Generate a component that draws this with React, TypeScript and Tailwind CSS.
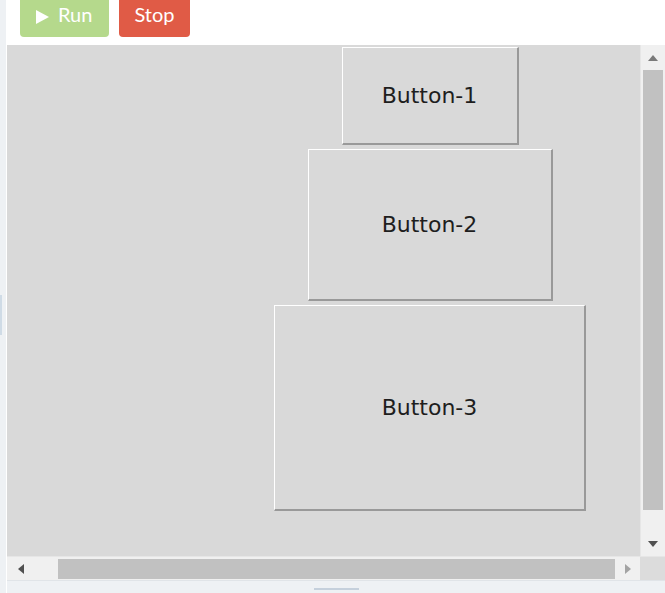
import React from 'react';

const TkButton = ({ label, w, h }: { label: string; w: string; h: string }) => (
  <div
    className={`${w} ${h} flex items-center justify-center bg-[#d9d9d9] border-t border-l border-white border-b-2 border-r-2 border-b-[#999999] border-r-[#999999] text-[22px] text-[#1e1e1e] [font-family:'DejaVu_Sans',sans-serif]`}
  >
    {label}
  </div>
);

export default function App() {
  return (
    <div className="w-[665px] h-[593px] flex bg-[#eef1f4] overflow-hidden">
      {/* left gutter */}
      <div className="w-[7px] shrink-0 flex flex-col border-r border-white">
        <div className="h-[295px]" />
        <div className="h-[40px] w-[2px] bg-[#cfdbe6]" />
      </div>

      <div className="flex-1 flex flex-col">
        {/* toolbar */}
        <div className="h-[45px] shrink-0 bg-white flex items-end gap-[10px] pl-[13px] pb-[8px] overflow-hidden [font-family:Lato,sans-serif]">
          <div className="h-[44px] w-[89px] shrink-0 rounded-[4px] bg-[#b5d98c] text-white text-[20px] flex items-end pb-[8px] pl-[16px] gap-[9px]">
            <svg width="13" height="14" viewBox="0 0 13 14" className="mb-[5px]">
              <path d="M0 0 L13 7 L0 14 Z" fill="white" />
            </svg>
            <span>Run</span>
          </div>
          <div className="h-[44px] w-[71px] shrink-0 rounded-[4px] bg-[#e05b46] text-white text-[20px] flex items-end justify-center pb-[8px]">
            <span>Stop</span>
          </div>
        </div>

        {/* canvas + scrollbars */}
        <div className="flex-1 flex flex-col">
          <div className="flex-1 flex">
            <div className="flex-1 bg-[#d9d9d9] pl-[213px] pt-[2px] flex flex-col items-center gap-[4px]">
              <TkButton label="Button-1" w="w-[177px]" h="h-[98px]" />
              <TkButton label="Button-2" w="w-[245px]" h="h-[152px]" />
              <TkButton label="Button-3" w="w-[312px]" h="h-[206px]" />
            </div>
            {/* vertical scrollbar */}
            <div className="w-[25px] bg-[#f0f0f0] flex flex-col items-center border-l border-[#e6e6e6]">
              <div className="h-[25px] flex items-center justify-center">
                <svg width="10" height="6" viewBox="0 0 10 6"><path d="M0 6 L5 0 L10 6 Z" fill="#7a7a7a" /></svg>
              </div>
              <div className="w-[20px] h-[440px] bg-[#c1c1c1]" />
              <div className="flex-1" />
              <div className="h-[24px] flex items-center justify-center">
                <svg width="10" height="6" viewBox="0 0 10 6"><path d="M0 0 L10 0 L5 6 Z" fill="#505050" /></svg>
              </div>
            </div>
          </div>
          {/* horizontal scrollbar */}
          <div className="h-[24px] flex border-t border-[#e6e6e6]">
            <div className="flex-1 bg-[#f0f0f0] flex items-center">
              <div className="w-[51px] flex pl-[11px]">
                <svg width="6" height="10" viewBox="0 0 6 10"><path d="M6 0 L0 5 L6 10 Z" fill="#505050" /></svg>
              </div>
              <div className="w-[557px] h-[20px] bg-[#c1c1c1]" />
              <div className="flex-1 flex justify-center">
                <svg width="6" height="10" viewBox="0 0 6 10"><path d="M0 0 L6 5 L0 10 Z" fill="#a3a3a3" /></svg>
              </div>
            </div>
            <div className="w-[25px] bg-[#dcdcdc]" />
          </div>
          {/* bottom strip */}
          <div className="h-[13px] border-t border-[#e0e4e8] flex justify-center">
            <div className="mt-[7px] w-[45px] h-[2px] bg-[#c5d0dc]" />
          </div>
        </div>
      </div>
    </div>
  );
}
